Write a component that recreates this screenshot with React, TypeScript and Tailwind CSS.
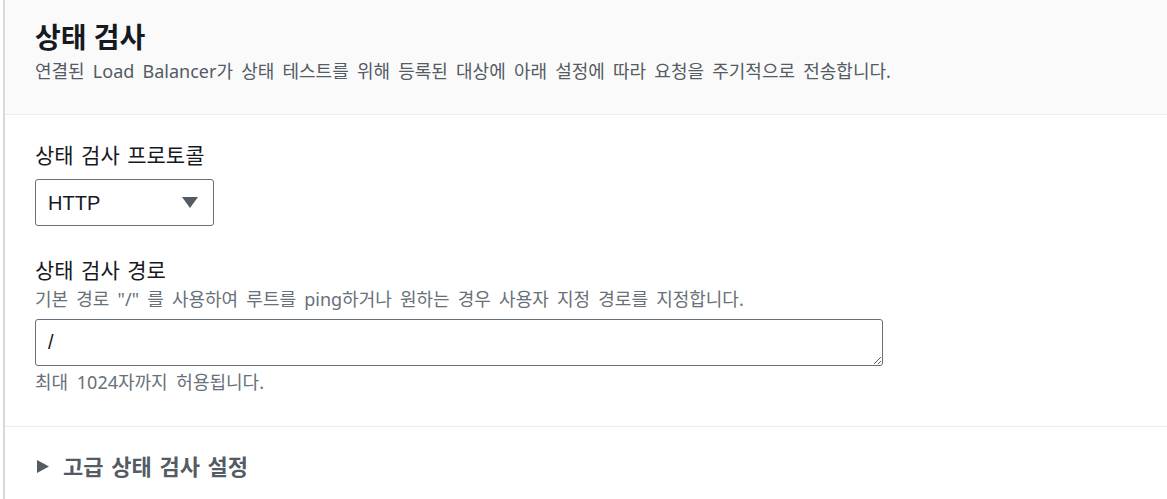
import React from "react";

const font = { fontFamily: '"Noto Sans", "Noto Sans CJK KR", sans-serif' };
const latin = { fontFamily: '"Liberation Sans", Arial, sans-serif' };

export default function App() {
  return (
    <div className="min-h-screen bg-white pl-[3px]" style={font}>
      <div className="min-h-[499px] border-l-2 border-[#d5dbdb]">
        {/* HEADER */}
        <div className="h-[115px] bg-[#fafafa] border-b border-[#eaeded] pl-[30px] pt-[18px]">
          <h2 className="text-[28px] font-bold leading-[38px] text-[#16191f]">상태 검사</h2>
          <p className="mt-[2px] text-[18px] leading-[26px] text-[#545b64] [word-spacing:3.5px]">
            연결된 Load Balancer가 상태 테스트를 위해 등록된 대상에 아래 설정에 따라 요청을 주기적으로 전송합니다.
          </p>
        </div>

        {/* BODY */}
        <div className="pl-[30px] pt-[26px] border-b border-[#eaeded] pb-[31px]">
          <label className="block text-[21px] leading-[28px] text-[#16191f] [word-spacing:2px]">상태 검사 프로토콜</label>
          <div className="mt-[10px] flex h-[47px] w-[179px] items-center justify-between rounded-[3px] border border-[#687078] pl-[12px] pr-[15px]">
            <span className="text-[20px] text-[#16191f]" style={latin}>HTTP</span>
            <svg width="16" height="11" viewBox="0 0 16 11">
              <path d="M0 0 L16 0 L8 11 Z" fill="#545b64" />
            </svg>
          </div>

          <label className="mt-[30px] block text-[21px] leading-[28px] text-[#16191f] [word-spacing:2px]">상태 검사 경로</label>
          <p className="mt-[2px] text-[18px] leading-[26px] text-[#687078] [word-spacing:3.5px]">
            기본 경로 "/" 를 사용하여 루트를 ping하거나 원하는 경우 사용자 지정 경로를 지정합니다.
          </p>
          <textarea
            defaultValue="/"
            rows={1}
            className="mt-[7px] block h-[47px] w-[848px] resize-y rounded-[3px] border border-[#687078] px-[12px] py-[9px] text-[20px] leading-[26px] text-[#16191f] outline-none"
            style={latin}
          />
          <p className="mt-[3px] text-[18px] leading-[26px] text-[#687078] [word-spacing:4px]">최대 1024자까지 허용됩니다.</p>
        </div>

        {/* ADVANCED */}
        <div className="pl-[32px] pt-[24px] flex items-center gap-[14px]">
          <svg width="12" height="13" viewBox="0 0 12 13">
            <path d="M0 0 L12 6.5 L0 13 Z" fill="#545b64" />
          </svg>
          <span className="text-[22px] font-bold leading-[30px] text-[#545b64] [word-spacing:2px]">고급 상태 검사 설정</span>
        </div>
      </div>
    </div>
  );
}
